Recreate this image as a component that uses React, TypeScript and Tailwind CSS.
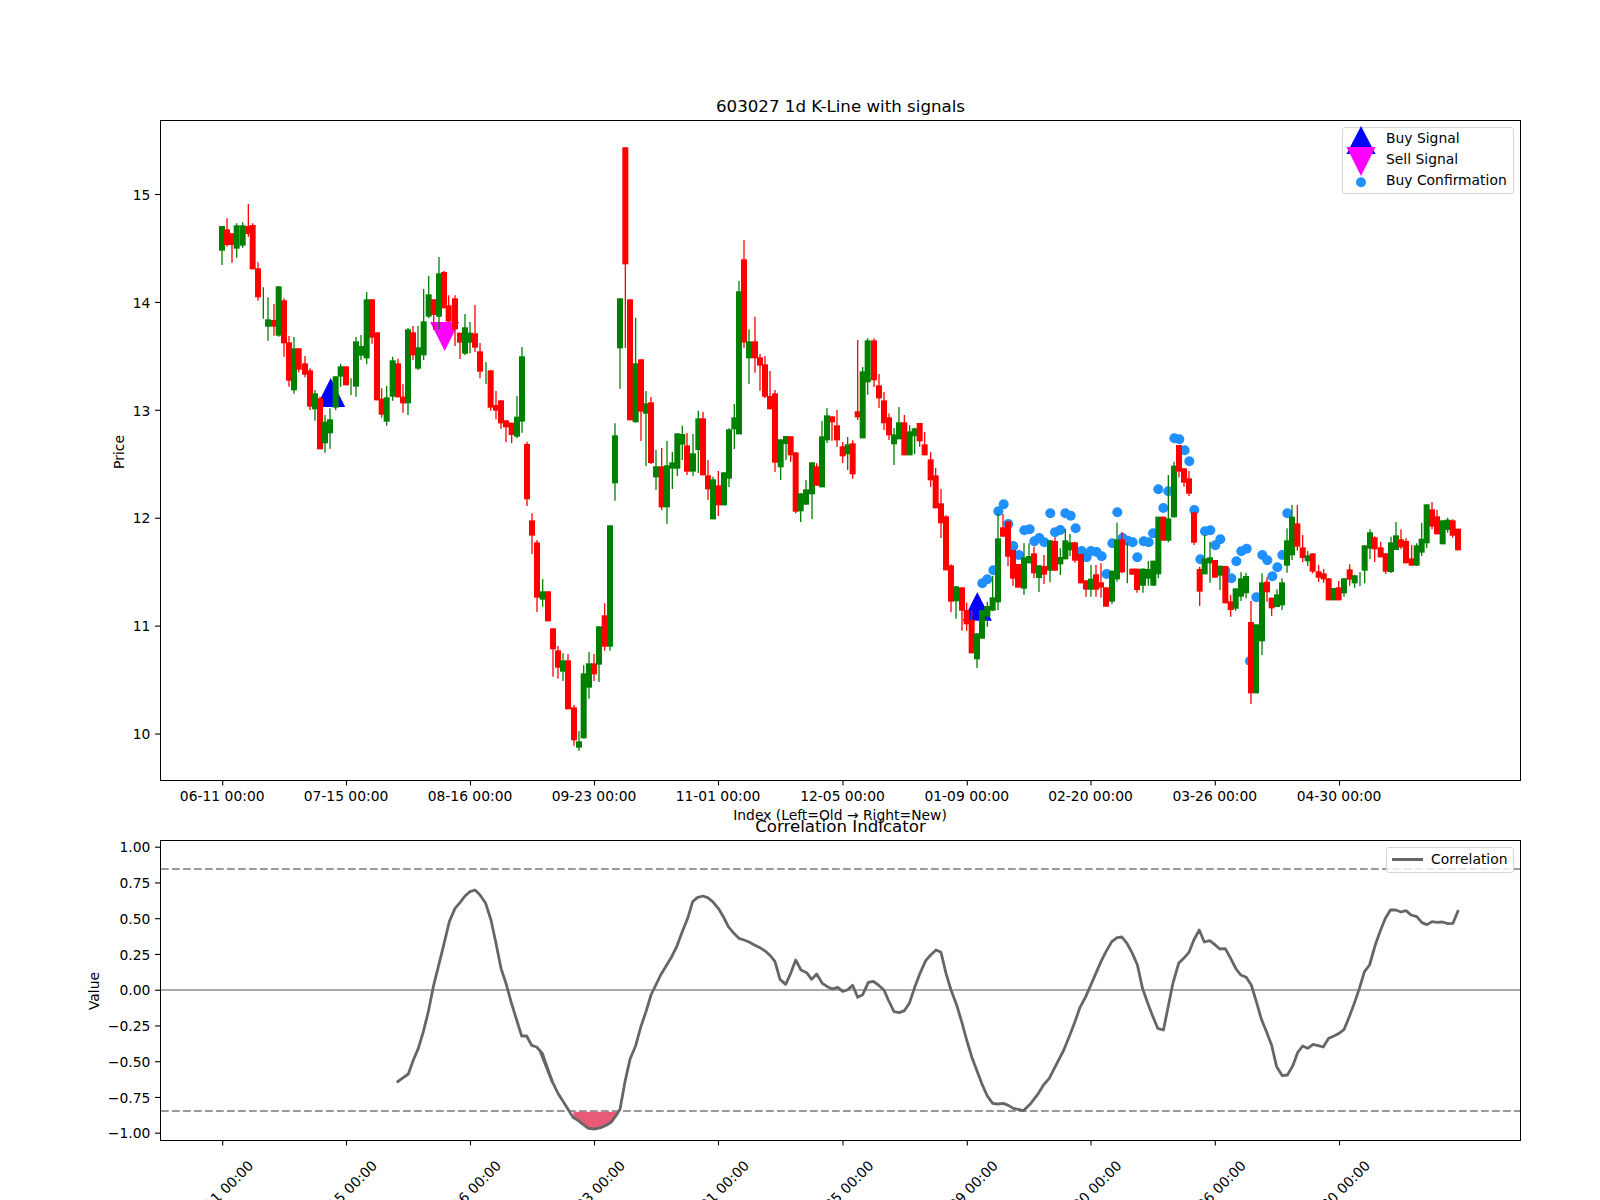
import React from 'react';

type Row = [number, number, number, number, number, 'g' | 'r'];

// candles traced from 3x crops: [x, wick top, body top, body bottom, wick bottom, colour]
const seg = (ox: number, oy: number, rows: Row[]) =>
  rows.map(([x, wt, bt, bb, wb, c]) => ({
    x: ox + x / 3,
    wt: oy + wt / 3,
    bt: oy + bt / 3,
    bb: oy + bb / 3,
    wb: oy + wb / 3,
    c,
  }));

const candles = [
  ...seg(200, 190, [
    [66, 108, 108, 182, 225, 'g'], [81, 85, 118, 165, 170, 'r'], [96, 130, 130, 165, 218, 'r'],
    [110, 100, 106, 176, 203, 'g'], [128, 97, 106, 167, 173, 'g'], [145, 42, 108, 132, 140, 'r'],
    [158, 100, 105, 238, 238, 'r'], [174, 217, 235, 322, 332, 'r'], [190, 292, 292, 292, 386, 'g'],
    [204, 322, 388, 410, 452, 'g'], [222, 342, 390, 410, 437, 'r'], [236, 289, 289, 437, 440, 'g'],
    [252, 325, 331, 460, 500, 'r'], [267, 438, 457, 572, 590, 'r'], [282, 441, 475, 601, 611, 'g'],
    [296, 475, 475, 539, 547, 'r'], [315, 498, 520, 554, 562, 'r'], [330, 535, 541, 650, 660, 'r'],
    [345, 600, 610, 658, 692, 'g'], [360, 620, 625, 778, 778, 'r'], [375, 675, 695, 760, 788, 'g'],
    [390, 655, 688, 730, 776, 'g'], [407, 559, 559, 653, 660, 'g'], [422, 521, 529, 560, 590, 'g'],
    [438, 529, 529, 586, 586, 'r'], [453, 565, 565, 565, 615, 'g'], [468, 441, 454, 590, 620, 'g'],
    [483, 435, 468, 497, 510, 'g'], [500, 306, 328, 505, 523, 'g'], [516, 328, 328, 443, 461, 'r'],
    [531, 427, 427, 631, 631, 'r'], [545, 595, 626, 674, 683, 'r'], [560, 588, 622, 695, 707, 'g'],
    [578, 500, 511, 620, 632, 'g'], [594, 506, 520, 622, 622, 'r'], [609, 583, 620, 640, 668, 'r'],
    [624, 414, 418, 640, 675, 'g'], [639, 408, 427, 496, 510, 'r'], [654, 408, 472, 536, 540, 'g'],
    [671, 297, 394, 496, 510, 'g'], [686, 258, 313, 380, 385, 'g'], [701, 328, 328, 375, 420, 'r'],
    [717, 201, 250, 380, 418, 'g'], [732, 243, 246, 355, 355, 'r'], [746, 316, 346, 395, 395, 'r'],
    [765, 316, 325, 418, 468, 'r'], [780, 428, 428, 458, 507, 'r'], [795, 372, 412, 491, 495, 'g'],
    [810, 396, 428, 458, 490, 'g'], [825, 345, 430, 473, 487, 'r'], [840, 459, 484, 545, 565, 'r'],
    [858, 516, 516, 516, 582, 'g'], [872, 541, 541, 653, 662, 'r'], [888, 603, 645, 662, 688, 'r'],
    [903, 631, 631, 700, 717, 'r'], [918, 691, 691, 712, 757, 'r'], [935, 698, 698, 735, 760, 'r'],
    [951, 618, 680, 740, 745, 'g'], [966, 471, 499, 695, 728, 'g'],
  ]),
  ...seg(520, 400, [
    [21, 125, 132, 298, 318, 'r'], [36, 340, 361, 407, 462, 'r'], [51, 420, 427, 593, 636, 'r'],
    [68, 537, 574, 599, 620, 'g'], [84, 574, 574, 664, 664, 'r'], [99, 685, 685, 748, 830, 'r'],
    [114, 738, 751, 803, 836, 'r'], [129, 760, 781, 815, 843, 'g'], [144, 762, 781, 928, 928, 'r'],
    [162, 915, 922, 1021, 1037, 'r'], [177, 993, 1024, 1043, 1052, 'g'], [191, 796, 820, 1015, 1015, 'g'],
    [207, 756, 790, 863, 896, 'g'], [222, 762, 790, 823, 843, 'r'], [237, 679, 679, 794, 846, 'g'],
    [254, 610, 646, 740, 752, 'r'], [270, 376, 376, 740, 752, 'g'],
  ]),
  ...seg(590, 270, [
    [75, 460, 496, 640, 692, 'g'], [90, 85, 85, 235, 356, 'g'], [106, -368, -368, -17, 234, 'r'],
    [120, 88, 88, 451, 451, 'r'], [137, 144, 280, 457, 457, 'g'], [153, 268, 268, 425, 513, 'r'],
    [168, 363, 400, 431, 588, 'g'], [183, 381, 397, 579, 582, 'r'], [198, 540, 589, 622, 660, 'g'],
    [215, 534, 589, 712, 720, 'r'], [231, 513, 586, 712, 762, 'g'], [247, 546, 577, 596, 657, 'g'],
    [262, 490, 490, 596, 618, 'g'], [277, 467, 492, 524, 570, 'g'], [291, 489, 526, 605, 615, 'r'],
    [309, 492, 550, 605, 618, 'g'], [325, 422, 445, 540, 609, 'g'], [339, 426, 445, 616, 616, 'r'],
    [354, 570, 616, 658, 690, 'r'], [369, 620, 628, 748, 748, 'g'], [385, 603, 646, 706, 738, 'r'],
    [402, 607, 607, 706, 706, 'g'], [417, 475, 478, 626, 651, 'g'], [433, 402, 442, 478, 537, 'g'],
    [447, 33, 64, 493, 493, 'g'], [462, -90, -32, 218, 234, 'r'], [477, 178, 214, 265, 342, 'g'],
    [495, 140, 214, 265, 308, 'r'], [510, 252, 262, 287, 362, 'r'], [525, 258, 283, 380, 384, 'r'],
    [540, 303, 378, 418, 418, 'r'], [555, 360, 370, 578, 606, 'r'], [572, 508, 508, 592, 630, 'g'],
    [588, 498, 498, 522, 570, 'g'], [602, 499, 499, 556, 575, 'r'], [617, 547, 547, 725, 730, 'r'],
  ]),
  ...seg(780, 320, [
    [62, 520, 520, 574, 606, 'g'], [78, 480, 508, 554, 554, 'g'], [96, 427, 427, 523, 597, 'g'],
    [110, 430, 439, 497, 497, 'r'], [126, 303, 349, 502, 502, 'g'], [141, 264, 286, 361, 369, 'g'],
    [156, 289, 289, 307, 362, 'r'], [171, 270, 316, 361, 380, 'r'], [188, 366, 379, 409, 429, 'r'],
    [203, 351, 373, 403, 450, 'g'], [218, 361, 370, 463, 476, 'r'], [233, 60, 274, 292, 300, 'r'],
    [248, 141, 154, 355, 355, 'g'], [263, 55, 61, 187, 224, 'g'], [282, 55, 61, 181, 201, 'r'],
    [297, 162, 196, 235, 264, 'r'], [312, 216, 241, 310, 330, 'r'], [327, 280, 292, 346, 360, 'r'],
    [342, 324, 343, 373, 435, 'g'], [357, 261, 307, 358, 358, 'g'], [373, 285, 307, 406, 406, 'r'],
    [389, 316, 334, 406, 406, 'g'], [404, 323, 325, 349, 402, 'g'], [419, 309, 309, 364, 380, 'r'],
    [434, 336, 373, 406, 406, 'r'], [452, 397, 418, 481, 500, 'r'], [467, 444, 466, 565, 565, 'r'],
    [483, 507, 550, 610, 654, 'r'], [498, 586, 589, 751, 751, 'r'], [513, 733, 736, 845, 877, 'r'],
    [528, 799, 799, 844, 896, 'g'],
  ]),
  ...seg(900, 420, [
    [186, 502, 502, 572, 632, 'r'], [200, 548, 570, 613, 632, 'r'], [215, 570, 600, 700, 700, 'r'],
    [231, 640, 640, 718, 744, 'g'], [246, 570, 570, 656, 656, 'g'], [262, 545, 558, 590, 620, 'g'],
    [278, 468, 532, 572, 572, 'g'], [294, 280, 355, 547, 570, 'g'], [309, 282, 322, 350, 350, 'r'],
    [324, 304, 304, 410, 438, 'r'], [339, 390, 390, 476, 498, 'r'], [354, 432, 432, 503, 503, 'r'],
    [372, 370, 412, 506, 524, 'g'], [387, 370, 408, 430, 430, 'g'], [402, 380, 400, 460, 474, 'r'],
    [417, 435, 436, 474, 516, 'g'], [432, 405, 438, 464, 492, 'r'], [450, 360, 361, 452, 487, 'g'],
    [465, 352, 363, 452, 452, 'r'], [481, 385, 411, 433, 465, 'g'], [496, 327, 361, 418, 418, 'g'],
    [510, 342, 367, 391, 408, 'g'], [525, 365, 367, 422, 428, 'r'], [543, 402, 402, 490, 490, 'r'],
    [558, 481, 481, 509, 530, 'r'], [573, 435, 476, 509, 530, 'g'], [588, 435, 463, 509, 530, 'r'],
    [603, 430, 487, 503, 533, 'r'], [618, 502, 502, 560, 560, 'r'], [636, 452, 452, 545, 552, 'g'],
    [651, 308, 358, 478, 485, 'g'], [666, 336, 358, 457, 460, 'r'], [682, 368, 368, 368, 490, 'g'],
    [697, 446, 446, 464, 464, 'r'], [711, 446, 446, 510, 518, 'r'], [729, 445, 446, 497, 518, 'g'],
    [745, 423, 447, 476, 497, 'g'], [760, 422, 422, 497, 497, 'g'], [775, 290, 290, 463, 475, 'g'],
    [790, 290, 290, 362, 362, 'r'], [805, 165, 295, 362, 367, 'g'], [822, 125, 137, 292, 292, 'g'],
    [837, 75, 75, 155, 172, 'r'], [852, 145, 145, 188, 200, 'r'], [867, 153, 175, 221, 228, 'r'],
    [882, 277, 277, 368, 375, 'r'], [899, 440, 447, 515, 558, 'r'], [914, 345, 415, 463, 463, 'g'],
    [930, 365, 412, 430, 488, 'g'], [945, 420, 420, 473, 473, 'r'], [960, 437, 437, 467, 510, 'g'],
    [976, 438, 438, 550, 550, 'r'], [992, 525, 544, 570, 590, 'r'], [1007, 505, 505, 566, 572, 'g'],
    [1023, 457, 475, 530, 543, 'g'], [1038, 458, 468, 520, 535, 'g'], [1053, 543, 606, 820, 852, 'r'],
    [1068, 613, 613, 820, 820, 'g'], [1086, 460, 487, 664, 705, 'g'], [1101, 472, 485, 517, 545, 'r'],
    [1115, 533, 533, 565, 588, 'r'], [1131, 508, 523, 561, 561, 'g'], [1146, 475, 487, 556, 570, 'g'],
    [1161, 325, 361, 437, 458, 'g'], [1176, 255, 290, 406, 420, 'g'], [1192, 255, 310, 380, 392, 'r'],
  ]),
  ...seg(1230, 470, [
    [218, 195, 232, 264, 277, 'r'], [233, 243, 256, 274, 288, 'g'], [248, 250, 250, 305, 310, 'r'],
    [266, 285, 304, 323, 336, 'r'], [281, 297, 310, 328, 338, 'r'], [296, 325, 325, 391, 391, 'r'],
    [311, 354, 354, 391, 391, 'g'], [326, 333, 352, 391, 391, 'r'], [342, 325, 325, 370, 380, 'g'],
    [359, 283, 298, 329, 347, 'r'], [374, 314, 316, 340, 353, 'g'], [390, 306, 306, 306, 348, 'g'],
    [404, 226, 226, 302, 340, 'g'], [420, 178, 187, 236, 267, 'g'], [434, 199, 202, 238, 276, 'r'],
    [452, 215, 232, 262, 262, 'r'], [467, 250, 250, 305, 312, 'r'], [483, 200, 217, 306, 309, 'g'],
    [498, 156, 196, 240, 240, 'g'], [513, 178, 208, 232, 238, 'r'], [528, 205, 213, 280, 280, 'r'],
    [545, 225, 265, 287, 287, 'r'], [560, 220, 226, 287, 287, 'g'], [575, 158, 206, 248, 258, 'g'],
    [590, 103, 103, 220, 234, 'g'], [606, 96, 118, 170, 178, 'r'], [621, 120, 139, 193, 193, 'r'],
    [638, 151, 151, 223, 223, 'g'], [653, 143, 149, 180, 188, 'g'], [668, 148, 151, 197, 203, 'r'],
    [684, 176, 176, 241, 241, 'r'],
  ]),
];

const confirmations = [
  [247, 490], [262, 478], [280, 451], [295, 274], [311, 253], [325, 312], [340, 378], [357, 405], [373, 331], [389, 328],
  [403, 364], [418, 354], [433, 367], [451, 280], [465, 337], [481, 330], [496, 280], [512, 287], [527, 325], [545, 393],
  [560, 412], [573, 393], [590, 396], [605, 409], [620, 462], [637, 370], [652, 277], [668, 354], [683, 362], [698, 367],
  [731, 364], [746, 367], [712, 412], [759, 340], [775, 208], [790, 264], [805, 214], [823, 55], [838, 58], [854, 91],
  [868, 124], [883, 270], [901, 418], [915, 334], [931, 331], [946, 376], [961, 358], [976, 452], [994, 475], [1009, 424],
  [1024, 394], [1040, 386], [1050, 723], [1069, 532], [1087, 405], [1102, 421], [1117, 469], [1132, 442], [1147, 405], [1162, 280],
].map(([x, y]) => [900 + x / 3, 420 + y / 3]);

const trace = (ox: number, k: number, pts: number[][]) =>
  pts.map(([x, y]) => [ox + x / k, 770 + y / 3]);

const correlation = [
  ...trace(60, 3, [
    [1010, 937], [1045, 912], [1060, 870], [1075, 835], [1090, 785], [1105, 725], [1120, 650], [1135, 590], [1150, 530],
    [1168, 455], [1185, 415], [1200, 398], [1215, 378], [1230, 365], [1245, 360], [1260, 375], [1277, 400], [1293, 450],
    [1308, 520], [1323, 595], [1338, 640], [1353, 695], [1370, 750], [1385, 798], [1400, 798], [1415, 826], [1430, 831],
    [1447, 850], [1462, 893], [1477, 937],
  ]),
  ...trace(540, 3, [
    [0, 842], [15, 875], [38, 937], [55, 972], [70, 995], [100, 1043], [115, 1052], [130, 1064], [145, 1075], [165, 1077],
    [182, 1073], [200, 1065], [213, 1057], [228, 1037], [240, 1018], [255, 935], [270, 868], [287, 827], [302, 772], [318, 725],
    [333, 675], [362, 615], [395, 560], [410, 530], [425, 490], [443, 445], [458, 395], [472, 383], [488, 378], [503, 383],
    [518, 395], [535, 415], [550, 440], [565, 470], [580, 488], [597, 505], [612, 510], [627, 516], [642, 524], [660, 533],
    [678, 545], [692, 558], [705, 575], [720, 628], [737, 643], [752, 610], [767, 570], [783, 600], [800, 608], [815, 628],
    [830, 612], [847, 640], [862, 650], [877, 657], [893, 652], [908, 664], [922, 660], [938, 646], [953, 682], [968, 674],
    [985, 637], [1000, 634], [1015, 645], [1032, 660], [1045, 690], [1062, 725], [1078, 728], [1093, 722], [1108, 700],
    [1123, 655], [1140, 610], [1157, 572], [1172, 555], [1188, 540], [1203, 547], [1218, 610], [1233, 660], [1250, 705],
    [1265, 755], [1280, 810], [1295, 860], [1310, 900], [1325, 940], [1342, 978], [1358, 1000], [1373, 1002], [1390, 1000],
    [1405, 1006], [1420, 1015], [1450, 1022],
  ]),
  ...trace(1030, 2.96, [
    [0, 1003], [25, 970], [40, 945], [57, 925], [72, 895], [100, 840], [118, 795], [133, 755], [148, 712], [165, 680],
    [180, 645], [195, 610], [210, 575], [225, 545], [242, 515], [258, 503], [272, 501], [287, 520], [302, 548], [318, 585],
    [333, 655], [348, 698], [363, 738], [378, 775], [395, 780], [410, 705], [423, 640], [440, 580], [455, 565], [470, 548],
    [485, 510], [501, 480], [516, 516], [532, 512], [547, 524], [562, 537], [578, 536], [594, 565], [610, 597], [624, 615],
    [640, 622], [655, 645], [670, 695], [685, 748], [700, 785], [715, 825], [730, 890], [747, 917], [762, 915], [778, 887],
    [792, 848], [807, 828], [822, 835], [838, 823], [853, 827], [868, 831], [884, 805], [900, 798], [915, 790], [930, 778],
    [945, 740], [960, 700], [975, 655], [990, 605], [1005, 585], [1022, 525], [1037, 482], [1052, 445], [1067, 420],
    [1083, 420], [1098, 426], [1113, 422], [1128, 435], [1145, 440], [1160, 458], [1175, 464], [1190, 455], [1205, 457],
    [1220, 456], [1237, 461], [1252, 460], [1268, 420],
  ]),
];

const breach = trace(540, 3, [
  [100, 1025], [100, 1043], [115, 1052], [130, 1064], [145, 1075], [165, 1077], [182, 1073], [200, 1065], [213, 1057], [228, 1037], [232, 1025],
]);

const toPoints = (pts: number[][]) => pts.map((p) => p.join(',')).join(' ');

const dates = [
  [222.7, '06-11 00:00'], [346.5, '07-15 00:00'], [470.5, '08-16 00:00'], [594.5, '09-23 00:00'], [718.5, '11-01 00:00'],
  [843, '12-05 00:00'], [967.3, '01-09 00:00'], [1091, '02-20 00:00'], [1215.3, '03-26 00:00'], [1339.5, '04-30 00:00'],
] as [number, string][];

const priceTicks = [15, 14, 13, 12, 11, 10].map((p) => ({ label: String(p), y: 194.5 + (15 - p) * 107.9 }));
const valueTicks = ['1.00', '0.75', '0.50', '0.25', '0.00', '−0.25', '−0.50', '−0.75', '−1.00'].map((label, i) => ({
  label,
  y: 847.2 + i * 35.75,
}));

const YAxis = ({ ticks }: { ticks: { label: string; y: number }[] }) => (
  <g>
    {ticks.map((t) => (
      <g key={t.label}>
        <line x1={155} x2={160.5} y1={t.y} y2={t.y} stroke="#000" strokeWidth={1.1} />
        <text x={150.3} y={t.y + 5.2} textAnchor="end">{t.label}</text>
      </g>
    ))}
  </g>
);

const KLine = () => (
  <svg viewBox="161 121 1359 659" className="block w-[1359px] h-[659px] overflow-visible text-[13.89px]">
    {confirmations.map(([x, y], i) => (
      <circle key={i} cx={x} cy={y} r={5} fill="#1e90ff" />
    ))}
    <polygon points="330.7,378 316.2,407 345.2,407" fill="#0000ff" />
    <polygon points="977.3,592 962.8,620.7 991.8,620.7" fill="#0000ff" />
    <polygon points="430.2,322 459.2,322 444.7,351" fill="#ff00ff" />
    {candles.map((c, i) => {
      const col = c.c === 'g' ? '#008000' : '#ff0000';
      return (
        <g key={i}>
          <line x1={c.x} x2={c.x} y1={c.wt} y2={c.wb} stroke={col} strokeWidth={1.3} />
          {c.bb > c.bt && <rect x={c.x - 3} y={c.bt} width={6} height={c.bb - c.bt} fill={col} />}
        </g>
      );
    })}
    <YAxis ticks={priceTicks} />
    {dates.map(([x, label]) => (
      <g key={label}>
        <line x1={x} x2={x} y1={780.5} y2={785.5} stroke="#000" strokeWidth={1.1} />
        <text x={x - 0.5} y={801} textAnchor="middle">{label}</text>
      </g>
    ))}
    <text x={840} y={819.5} textAnchor="middle">Index (Left=Old → Right=New)</text>
    <text transform="translate(123.5 452) rotate(-90)" textAnchor="middle">Price</text>
  </svg>
);

const Correlation = () => (
  <svg viewBox="161 841 1359 299" className="block w-[1359px] h-[299px] overflow-visible text-[13.89px]">
    <line x1={161} x2={1520} y1={869} y2={869} stroke="#999" strokeWidth={2.1} strokeDasharray="7.7 3.3" />
    <line x1={161} x2={1520} y1={1111} y2={1111} stroke="#999" strokeWidth={2.1} strokeDasharray="7.7 3.3" />
    <line x1={161} x2={1520} y1={990} y2={990} stroke="#aaa" strokeWidth={2.1} />
    <polygon points={toPoints(breach)} fill="#e75b77" />
    <polyline points={toPoints(correlation)} fill="none" stroke="#666" strokeWidth={2.8} strokeLinejoin="round" />
    <YAxis ticks={valueTicks} />
    {dates.map(([x, label]) => (
      <g key={label}>
        <line x1={x} x2={x} y1={1140.5} y2={1145.5} stroke="#000" strokeWidth={1.1} />
        <text x={x - 2} y={1198} textAnchor="middle" transform={`rotate(-45 ${x - 2} 1193)`}>{label}</text>
      </g>
    ))}
    <text transform="translate(99 991) rotate(-90)" textAnchor="middle">Value</text>
  </svg>
);

const SignalLegend = () => (
  <div className="absolute top-[6px] right-[6px] w-[172px] h-[67px] rounded-[3px] border border-[#d5d5d5] bg-white/80 pl-[43px] text-[13.89px] leading-[21px] text-black">
    <svg viewBox="0 0 32 60" className="absolute left-[1.5px] top-[-2px] w-[32px] h-[60px] overflow-visible">
      <polygon points="16,0 1.5,28 30.5,28" fill="#0000ff" />
      <polygon points="1.5,21 30.5,21 16,50" fill="#ff00ff" />
      <circle cx={16} cy={56.3} r={5} fill="#1e90ff" />
    </svg>
    <div>Buy Signal</div>
    <div>Sell Signal</div>
    <div>Buy Confirmation</div>
  </div>
);

const CorrelationLegend = () => (
  <div className="absolute top-[6px] right-[6px] flex h-[26px] w-[128px] items-center gap-[8px] rounded-[3px] border border-[#d5d5d5] bg-white/80 pl-[5px] pb-[1px] text-[13.89px] text-black">
    <span className="h-[3px] w-[31px] bg-[#666]" />
    <span>Correlation</span>
  </div>
);

export default function App() {
  return (
    <div className="h-[1200px] w-[1600px] overflow-hidden bg-white pt-[96px] pl-[160px] font-['DejaVu_Sans',sans-serif] text-black">
      <div className="w-[1361px]">
        <h2 className="h-[24px] text-center text-[16.67px] font-normal leading-[22px]">603027 1d K-Line with signals</h2>
        <div className="relative h-[661px] border border-black">
          <KLine />
          <SignalLegend />
        </div>
        <h2 className="mt-[35px] h-[24px] text-center text-[16.67px] font-normal leading-[22px]">Correlation Indicator</h2>
        <div className="relative h-[301px] border border-black">
          <Correlation />
          <CorrelationLegend />
        </div>
      </div>
    </div>
  );
}
